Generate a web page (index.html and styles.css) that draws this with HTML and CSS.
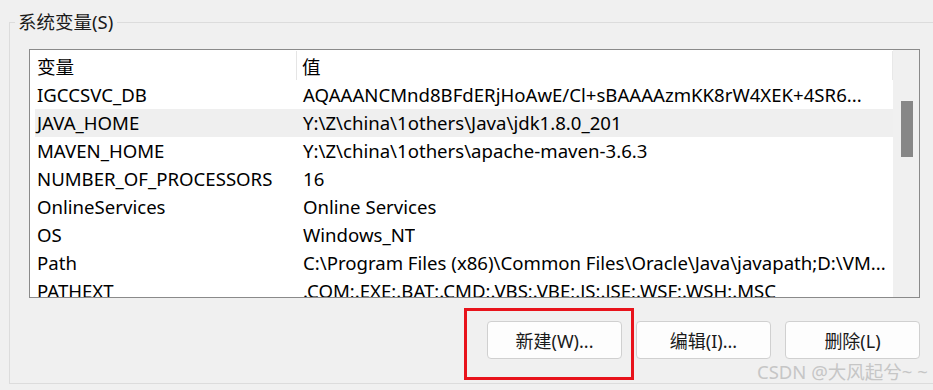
FILE: index.html
```html
<!DOCTYPE html>
<html lang="zh-CN">
<head>
<meta charset="utf-8">
<title>系统变量</title>
<link rel="stylesheet" href="styles.css">
</head>
<body>
<fieldset class="group">
  <legend class="group-label">系统变量(S)</legend>
  <div class="listview">
    <div class="list-main">
      <div class="list-header">
        <div class="hcell hcell-name">变量</div>
        <div class="hcell hcell-value">值</div>
      </div>
      <div class="rows">
        <div class="row"><span class="c-name">IGCCSVC_DB</span><span class="c-value">AQAAANCMnd8BFdERjHoAwE/Cl+sBAAAAzmKK8rW4XEK+4SR6...</span></div>
        <div class="row row-hover"><span class="c-name">JAVA_HOME</span><span class="c-value">Y:\Z\china\1others\Java\jdk1.8.0_201</span></div>
        <div class="row"><span class="c-name">MAVEN_HOME</span><span class="c-value">Y:\Z\china\1others\apache-maven-3.6.3</span></div>
        <div class="row"><span class="c-name">NUMBER_OF_PROCESSORS</span><span class="c-value">16</span></div>
        <div class="row"><span class="c-name">OnlineServices</span><span class="c-value">Online Services</span></div>
        <div class="row"><span class="c-name">OS</span><span class="c-value">Windows_NT</span></div>
        <div class="row"><span class="c-name">Path</span><span class="c-value">C:\Program Files (x86)\Common Files\Oracle\Java\javapath;D:\VM...</span></div>
        <div class="row"><span class="c-name">PATHEXT</span><span class="c-value">.COM;.EXE;.BAT;.CMD;.VBS;.VBE;.JS;.JSE;.WSF;.WSH;.MSC</span></div>
      </div>
    </div>
    <div class="scrollbar"><div class="thumb"></div></div>
  </div>
  <div class="buttons">
    <button class="btn btn-marked" type="button">新建(W)...<span class="mark"></span></button>
    <button class="btn" type="button">编辑(I)...</button>
    <button class="btn" type="button">删除(L)</button>
  </div>
</fieldset>
<div class="watermark">CSDN @大风起兮~ ~</div>
</body>
</html>
```
FILE: styles.css
```css
html, body {
  margin: 0;
  padding: 0;
}
body {
  width: 933px;
  height: 390px;
  overflow: hidden;
  background: #f0f0f0;
  font-family: "Noto Sans", "Noto Sans CJK SC", sans-serif;
  font-size: 18.6px;
  color: #000;
  position: relative;
}
.group {
  margin: 10px 0 0 9px;
  padding: 0 0 0 19px;
  width: 960px;
  height: 374px;
  box-sizing: border-box;
  border: 1px solid #dcdcdc;
  border-right: none;
  min-width: 0;
}
.group-label {
  margin-left: -14px;
  padding: 0 4px 0 3px;
  font-size: 18.5px;
  line-height: 24px;
  color: #1a1a1a;
}
.listview {
  margin-top: 15px;
  width: 891px;
  height: 249px;
  box-sizing: border-box;
  border: 1px solid #8a8a8a;
  background: #fff;
  display: flex;
  overflow: hidden;
}
.list-main {
  flex: 1;
  min-width: 0;
  overflow: hidden;
}
.list-header {
  height: 31px;
  display: flex;
  margin-left: 5px;
}
.hcell {
  white-space: nowrap;
  height: 29px;
  margin-top: 1px;
  line-height: 31px;
}
.hcell-name {
  width: 262px;
  padding-left: 2px;
  box-sizing: border-box;
  border-right: 1px solid #e5e5e5;
}
.hcell-value {
  padding-left: 5px;
  flex: 1;
  border-right: 1px solid #e8e8e8;
}
.rows {
  margin-left: 5px;
}
.row {
  height: 28px;
  line-height: 28px;
  display: flex;
  white-space: nowrap;
}
.row-hover {
  background: #efefef;
}
.c-name {
  width: 262px;
  padding-left: 2px;
  box-sizing: border-box;
  flex: none;
}
.c-value {
  padding-left: 6px;
  overflow: hidden;
}
.scrollbar {
  width: 26px;
  flex: none;
  background: #f0f0f0;
  padding-top: 51px;
  box-sizing: border-box;
}
.thumb {
  margin-left: 8px;
  width: 12px;
  height: 56px;
  background: #878787;
}
.buttons {
  display: flex;
  gap: 14px;
  justify-content: flex-end;
  width: 891px;
  margin-top: 23px;
}
.btn {
  width: 135px;
  height: 38px;
  box-sizing: border-box;
  border: 1px solid #d0d0d0;
  border-radius: 4px;
  background: #fdfdfd;
  font-family: "Noto Sans", "Noto Sans CJK SC", sans-serif;
  font-size: 18px;
  color: #1a1a1a;
  padding: 0;
}
.btn-marked {
  position: relative;
}
.mark {
  position: absolute;
  left: -24px;
  top: -14px;
  width: 170px;
  height: 72px;
  box-sizing: border-box;
  border: 3px solid #e8131b;
}
.watermark {
  position: absolute;
  left: 757px;
  top: 360px;
  font-size: 18.5px;
  line-height: 24px;
  color: #c6c6c6;
  white-space: nowrap;
}
```
